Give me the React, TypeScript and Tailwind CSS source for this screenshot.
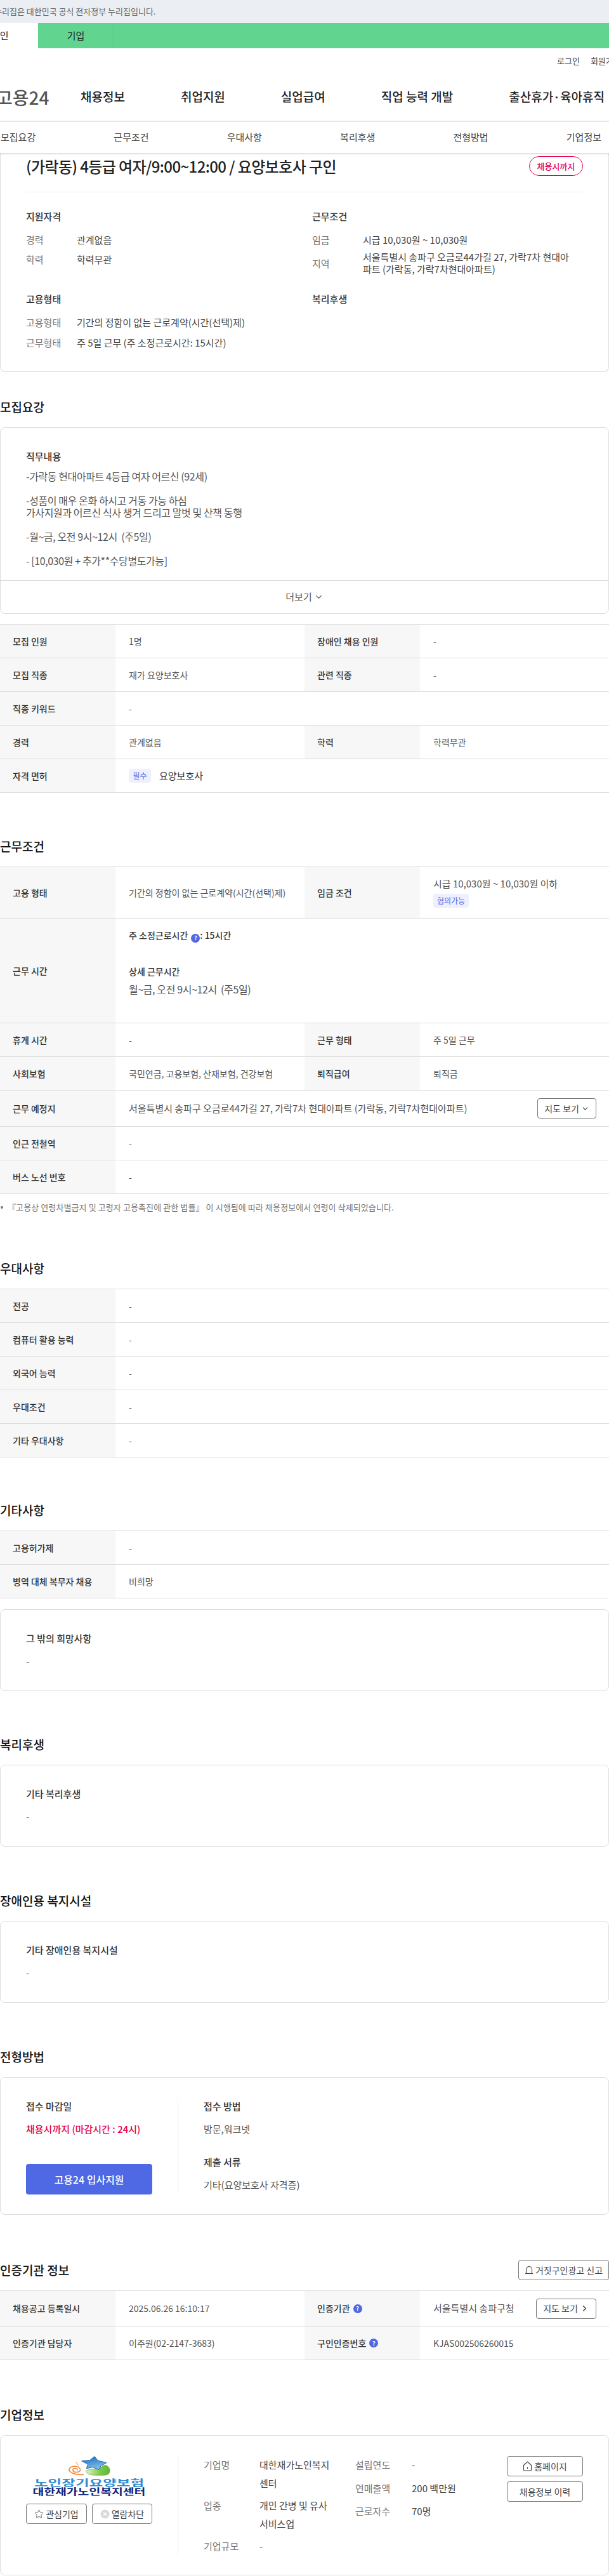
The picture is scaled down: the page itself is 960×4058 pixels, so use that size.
import type { ReactNode } from "react";
import { ChevronDown, ChevronRight, Star } from "lucide-react";

function HomeIcon() {
  return (
    <svg width="15" height="16" viewBox="0 0 15 16" fill="none" stroke="#444" strokeWidth="1.1">
      <path d="M1.5 6.5 7.5 1l6 5.5v7.5a1 1 0 0 1-1 1h-10a1 1 0 0 1-1-1z" strokeLinejoin="round" />
      <path d="M7.5 9.5v2.5" />
    </svg>
  );
}

function ReportIcon() {
  return (
    <svg width="14" height="14" viewBox="0 0 14 14" fill="none" stroke="#444" strokeWidth="1.1">
      <path d="M2.5 12.5V6a4.5 4.5 0 0 1 9 0v6.5" />
      <path d="M1 12.5h12" />
    </svg>
  );
}

function HelpDot() {
  return (
    <span className="mx-[5px] inline-flex h-[14px] w-[14px] items-center justify-center rounded-full bg-[#4f68e4] align-[-2px] text-[9px] leading-none font-bold text-white">
      ?
    </span>
  );
}

function Th({ children, className = "" }: { children: ReactNode; className?: string }) {
  return (
    <div className={`flex items-center bg-[#f7f7f7] pl-[20px] text-[14px] font-medium text-[#333] ${className}`}>{children}</div>
  );
}

function Td({ children, className = "" }: { children: ReactNode; className?: string }) {
  return <div className={`flex items-center pl-[21px] text-[14px] text-[#555] ${className}`}>{children}</div>;
}

// 4칸짜리 행
function Row4({ a, b, c, d }: { a: ReactNode; b: ReactNode; c: ReactNode; d: ReactNode }) {
  return (
    <div className="grid min-h-[53px] grid-cols-[182px_298px_182px_298px] border-b border-[#ddd]">
      <Th>{a}</Th>
      <Td>{b}</Td>
      <Th>{c}</Th>
      <Td>{d}</Td>
    </div>
  );
}

// 2칸짜리 행
function Row2({ a, b }: { a: ReactNode; b: ReactNode }) {
  return (
    <div className="grid min-h-[53px] grid-cols-[182px_778px] border-b border-[#ddd]">
      <Th>{a}</Th>
      <Td>{b}</Td>
    </div>
  );
}

function Heading({ children, right }: { children: ReactNode; right?: ReactNode }) {
  return (
    <div className="mb-[16px] flex h-[32px] items-center justify-between">
      <h2 className="text-[19px] font-medium text-[#111]">{children}</h2>
      {right}
    </div>
  );
}

function Table({ children }: { children: ReactNode }) {
  return <div className="border-t border-[#ddd]">{children}</div>;
}

function NoteCard({ title, className = "" }: { title: string; className?: string }) {
  return (
    <div className={`h-[129px] rounded-[8px] border border-[#ddd] pt-[33px] pl-[40px] ${className}`}>
      <div className="text-[15px] leading-[23px] font-medium text-[#333]">{title}</div>
      <div className="mt-[13px] text-[15px] leading-[23px] text-[#555]">-</div>
    </div>
  );
}

function OutlineBtn({ children, className = "" }: { children: ReactNode; className?: string }) {
  return (
    <button className={`flex h-[32px] items-center justify-center gap-[3px] rounded-[4px] border border-[#777] bg-white text-[14px] text-[#444] ${className}`}>
      {children}
    </button>
  );
}

function KV({ label, children, align = "items-center", width = "w-[80px]", valueClass = "" }: { label: string; children: ReactNode; align?: string; width?: string; valueClass?: string }) {
  return (
    <div className={`flex text-[15px] ${align}`}>
      <span className={`shrink-0 text-[#777] ${width}`}>{label}</span>
      <span className={`text-[#444] ${valueClass}`}>{children}</span>
    </div>
  );
}

function CompanyLogo() {
  return (
    <div className="flex h-[62px] flex-col items-center">
      <svg width="68" height="32" viewBox="320 148 205 95">
        <defs>
          <linearGradient id="starFill" x1="0" y1="0" x2="0.4" y2="1">
            <stop offset="0" stopColor="#1668b8" />
            <stop offset="1" stopColor="#7fc0ee" />
          </linearGradient>
          <linearGradient id="heartFill" x1="0" y1="0" x2="1" y2="0">
            <stop offset="0" stopColor="#e6f3c9" />
            <stop offset="0.6" stopColor="#7cc94a" />
            <stop offset="1" stopColor="#5fb73a" />
          </linearGradient>
        </defs>
        <path d="M395 238C350 240 320 225 325 210C330 195 370 192 378 212C382 228 345 232 342 215C342 205 365 205 365 217" fill="none" stroke="#f08a3c" strokeWidth="5" />
        <path d="M356 176l14 18" stroke="#f08a3c" strokeWidth="3" />
        <path d="M405 220C430 205 470 215 490 195C505 185 525 205 520 225C515 240 505 243 440 240C420 238 405 230 405 220Z" fill="url(#heartFill)" stroke="#4da52f" strokeWidth="2" />
        <path d="M447 150L463 170L505 180L478 196L468 214L440 202L408 208L415 188L385 172L425 168Z" fill="url(#starFill)" stroke="#1c5fae" strokeWidth="3" />
      </svg>
      <div className="mt-[3px] origin-center scale-x-[1.68] text-[14px] leading-[14px] font-bold whitespace-nowrap text-[#2d8cd0]">노인장기요양보험</div>
      <div className="origin-center scale-x-[1.38] text-[14px] leading-[14px] font-bold whitespace-nowrap text-[#12257d]">대한재가노인복지센터</div>
    </div>
  );
}

export default function App() {
  const subNav = ["모집요강", "근무조건", "우대사항", "복리후생", "전형방법", "기업정보"];

  return (
    <div className="w-[960px] overflow-hidden bg-white font-['Noto_Sans_CJK_KR','Noto_Sans',sans-serif] text-[#333]">
      {/* 상단 배너 */}
      <div className="flex h-[36px] items-center bg-[#ebeff4] text-[13px] whitespace-nowrap text-[#666]">
        <span className="-ml-[9px]">누리집은 대한민국 공식 전자정부 누리집입니다.</span>
      </div>
      <div className="flex h-[40px] bg-[#61d590] text-[15px] text-[#222]">
        <div className="flex w-[60px] items-center bg-white">
          <span className="-ml-[14px]">개인</span>
        </div>
        <div className="flex w-[120px] items-center justify-center border-r border-[#55c884]">기업</div>
      </div>

      {/* 헤더 */}
      <div className="flex h-[40px] items-center gap-[17px] pl-[878px] text-[13px] whitespace-nowrap text-[#444]">
        <span>로그인</span>
        <span>회원가입</span>
      </div>
      <div className="flex h-[76px] items-center border-b-2 border-[#eee] pb-[1px] whitespace-nowrap">
        <div className="w-[127px] shrink-0">
          <span className="-ml-[6px] block text-[28px] font-medium text-[#555]">고용24</span>
        </div>
        <nav className="flex gap-[88px] text-[19px] font-medium text-[#222]">
          <span>채용정보</span>
          <span>취업지원</span>
          <span>실업급여</span>
          <span>직업 능력 개발</span>
          <span>출산휴가·육아휴직</span>
        </nav>
      </div>
      <div className="relative z-10 flex h-[49px] items-center justify-between bg-white pr-[12px] pl-[1px] text-[15px] text-[#444] shadow-[0_1px_3px_rgba(0,0,0,0.2)]">
        {subNav.map((t) => (
          <span key={t}>{t}</span>
        ))}
      </div>

      {/* 공고 요약 */}
      <div className="h-[345px] rounded-b-[8px] border-x border-b border-[#ddd] px-[40px]">
        <div className="flex h-[62px] items-start justify-between border-b border-[#eee] pt-[5px]">
          <h1 className="text-[24px] leading-[31px] font-medium tracking-[-0.6px] text-[#222]">(가락동) 4등급 여자/9:00~12:00 / 요양보호사 구인</h1>
          <span className="flex h-[31px] w-[85px] items-center justify-center rounded-full border border-[#e6004d] text-[13px] font-medium text-[#e6004d]">
            채용시까지
          </span>
        </div>
        <div className="grid grid-cols-[451px_427px] pt-[26px]">
          <div className="h-[130px]">
            <h3 className="mb-[14px] text-[15px] leading-[23px] font-medium">지원자격</h3>
            <div className="flex flex-col gap-[8px] leading-[23px]">
              <KV label="경력">관계없음</KV>
              <KV label="학력">학력무관</KV>
            </div>
          </div>
          <div className="h-[130px]">
            <h3 className="mb-[14px] text-[15px] leading-[23px] font-medium">근무조건</h3>
            <div className="flex flex-col gap-[6px] leading-[23px]">
              <KV label="임금">시급 10,030원 ~ 10,030원</KV>
              <div className="leading-[19px]">
                <KV label="지역">
                  서울특별시 송파구 오금로44가길 27, 가락7차 현대아
                  <br />
                  파트 (가락동, 가락7차현대아파트)
                </KV>
              </div>
            </div>
          </div>
          <div>
            <h3 className="mb-[14px] text-[15px] leading-[23px] font-medium">고용형태</h3>
            <div className="flex flex-col gap-[9px] leading-[23px]">
              <KV label="고용형태">기간의 정함이 없는 근로계약(시간(선택)제)</KV>
              <KV label="근무형태">주 5일 근무 (주 소정근로시간: 15시간)</KV>
            </div>
          </div>
          <div>
            <h3 className="text-[15px] leading-[23px] font-medium">복리후생</h3>
          </div>
        </div>
      </div>

      {/* 모집요강 */}
      <section className="mt-[39px]">
        <Heading>모집요강</Heading>
        <div className="rounded-[8px] border border-[#ddd]">
          <div className="h-[240px] px-[40px] pt-[33px]">
            <div className="text-[15px] leading-[23px] font-medium">직무내용</div>
            <div className="mt-[11px] text-[16px] leading-[19px] tracking-[-0.4px] whitespace-pre-wrap text-[#555]">
              {"-가락동 현대아파트 4등급 여자 어르신 (92세)\n\n-성품이 매우 온화 하시고 거동 가능 하심\n가사지원과 어르신 식사 챙겨 드리고 말벗 및 산책 동행\n\n-월~금, 오전 9시~12시  (주5일)\n\n- [10,030원 + 추가**수당별도가능]"}
            </div>
          </div>
          <div className="flex h-[52px] items-center justify-center gap-[3px] border-t border-[#ddd] text-[15px] text-[#555]">
            더보기 <ChevronDown size={15} strokeWidth={2} />
          </div>
        </div>
        <div className="mt-[16px]">
          <Table>
            <Row4 a="모집 인원" b="1명" c="장애인 채용 인원" d="-" />
            <Row4 a="모집 직종" b="재가 요양보호사" c="관련 직종" d="-" />
            <Row2 a="직종 키워드" b="-" />
            <Row4 a="경력" b="관계없음" c="학력" d="학력무관" />
            <Row2
              a="자격 면허"
              b={
                <span className="flex items-center gap-[13px] text-[15px] text-[#333]">
                  <span className="flex h-[22px] w-[35px] items-center justify-center rounded-[4px] bg-[#eef0fd] text-[12px] text-[#4f68e4]">필수</span>
                  요양보호사
                </span>
              }
            />
          </Table>
        </div>
      </section>

      {/* 근무조건 */}
      <section className="mt-[68px]">
        <Heading>근무조건</Heading>
        <Table>
          <div className="grid min-h-[81px] grid-cols-[182px_298px_182px_298px] border-b border-[#ddd]">
            <Th>고용 형태</Th>
            <Td className="whitespace-nowrap">기간의 정함이 없는 근로계약(시간(선택)제)</Td>
            <Th>임금 조건</Th>
            <Td className="flex-col !items-start justify-center gap-[6px] text-[15px]">
              <span className="leading-[20px]">시급 10,030원 ~ 10,030원 이하</span>
              <span className="flex h-[22px] w-[56px] items-center justify-center rounded-[4px] bg-[#eef0fd] text-[12px] text-[#4f68e4]">협의가능</span>
            </Td>
          </div>
          <div className="grid min-h-[165px] grid-cols-[182px_778px] border-b border-[#ddd]">
            <Th>근무 시간</Th>
            <div className="pt-[15px] pl-[21px] text-[14px]">
              <div className="leading-[22px] font-medium">
                주 소정근로시간
                <HelpDot />
                <span className="-ml-[5px]">: 15시간</span>
              </div>
              <div className="mt-[34px] leading-[22px] font-medium">상세 근무시간</div>
              <div className="mt-[6px] text-[16px] leading-[22px] tracking-[-0.4px] whitespace-pre-wrap text-[#555]">월~금, 오전 9시~12시  (주5일)</div>
            </div>
          </div>
          <Row4 a="휴게 시간" b="-" c="근무 형태" d="주 5일 근무" />
          <Row4 a="사회보험" b="국민연금, 고용보험, 산재보험, 건강보험" c="퇴직급여" d="퇴직금" />
          <div className="grid min-h-[57px] grid-cols-[182px_778px] border-b border-[#ddd]">
            <Th>근무 예정지</Th>
            <Td className="justify-between pr-[20px] text-[15px]">
              서울특별시 송파구 오금로44가길 27, 가락7차 현대아파트 (가락동, 가락7차현대아파트)
              <OutlineBtn className="w-[93px]">
                지도 보기 <ChevronDown size={13} />
              </OutlineBtn>
            </Td>
          </div>
          <Row2 a="인근 전철역" b="-" />
          <Row2 a="버스 노선 번호" b="-" />
        </Table>
        <p className="mt-[11px] flex items-center gap-[7px] pl-[1px] text-[13px] leading-[20px] tracking-[0.1px] text-[#777]">
          <span className="h-[4px] w-[4px] rounded-full bg-[#777]" />
          『고용상 연령차별금지 및 고령자 고용촉진에 관한 법률』 이 시행됨에 따라 채용정보에서 연령이 삭제되었습니다.
        </p>
      </section>

      {/* 우대사항 */}
      <section className="mt-[70px]">
        <Heading>우대사항</Heading>
        <Table>
          <Row2 a="전공" b="-" />
          <Row2 a="컴퓨터 활용 능력" b="-" />
          <Row2 a="외국어 능력" b="-" />
          <Row2 a="우대조건" b="-" />
          <Row2 a="기타 우대사항" b="-" />
        </Table>
      </section>

      {/* 기타사항 */}
      <section className="mt-[67px]">
        <Heading>기타사항</Heading>
        <Table>
          <Row2 a="고용허가제" b="-" />
          <Row2 a="병역 대체 복무자 채용" b="비희망" />
        </Table>
        <NoteCard title="그 밖의 희망사항" className="mt-[17px]" />
      </section>

      <section className="mt-[68px]">
        <Heading>복리후생</Heading>
        <NoteCard title="기타 복리후생" />
      </section>

      <section className="mt-[69px]">
        <Heading>장애인용 복지시설</Heading>
        <NoteCard title="기타 장애인용 복지시설" />
      </section>

      {/* 전형방법 */}
      <section className="mt-[69px]">
        <Heading>전형방법</Heading>
        <div className="flex h-[217px] rounded-[8px] border border-[#ddd] pt-[32px] pl-[40px]">
          <div className="flex h-[152px] w-[240px] flex-col border-r border-[#eee] pr-[40px]">
            <div className="text-[15px] leading-[26px] font-medium">접수 마감일</div>
            <div className="mt-[10px] text-[15px] leading-[26px] font-medium text-[#e6004d]">채용시까지 (마감시간 : 24시)</div>
            <button className="mt-auto h-[48px] rounded-[4px] bg-[#4f68e4] text-[16px] font-medium text-white">고용24 입사지원</button>
          </div>
          <div className="pl-[40px]">
            <div className="text-[15px] leading-[26px] font-medium">접수 방법</div>
            <div className="mt-[10px] text-[15px] leading-[26px] text-[#555]">방문,워크넷</div>
            <div className="mt-[26px] text-[15px] leading-[26px] font-medium">제출 서류</div>
            <div className="mt-[10px] text-[15px] leading-[26px] text-[#555]">기타(요양보호사 자격증)</div>
          </div>
        </div>
      </section>

      {/* 인증기관 정보 */}
      <section className="mt-[71px]">
        <Heading
          right={
            <OutlineBtn className="w-[143px]">
              <ReportIcon /> 거짓구인광고 신고
            </OutlineBtn>
          }
        >
          인증기관 정보
        </Heading>
        <Table>
          <div className="grid min-h-[56px] grid-cols-[182px_298px_182px_298px] border-b border-[#ddd]">
            <Th>채용공고 등록일시</Th>
            <Td>2025.06.26 16:10:17</Td>
            <Th>
              인증기관
              <HelpDot />
            </Th>
            <Td className="justify-between pr-[20px] text-[15px]">
              서울특별시 송파구청
              <OutlineBtn className="w-[95px]">
                지도 보기 <ChevronRight size={15} strokeWidth={2.5} />
              </OutlineBtn>
            </Td>
          </div>
          <Row4
            a="인증기관 담당자"
            b="이주원(02-2147-3683)"
            c={
              <>
                구인인증번호
                <HelpDot />
              </>
            }
            d="KJAS002506260015"
          />
        </Table>
      </section>

      {/* 기업정보 */}
      <section className="mt-[70px]">
        <Heading>기업정보</Heading>
        <div className="flex h-[221px] rounded-[8px] border border-[#ddd] pt-[32px] pl-[40px]">
          <div className="h-[156px] w-[240px] border-r border-[#eee] pr-[40px]">
            <CompanyLogo />
            <div className="mt-[13px] flex gap-[8px]">
              <OutlineBtn className="w-[96px]">
                <Star size={15} strokeWidth={1.3} /> 관심기업
              </OutlineBtn>
              <OutlineBtn className="w-[95px]">
                <svg width="15" height="15" viewBox="0 0 15 15">
                  <circle cx="7.5" cy="7.5" r="7" fill="#d9d9d9" />
                  <path d="M5 5l5 5M10 5l-5 5" stroke="#fff" strokeWidth="1.3" />
                </svg>
                열람차단
              </OutlineBtn>
            </div>
          </div>
          <div className="flex pl-[40px] text-[15px] leading-[28.5px]">
            <div className="flex w-[239px] flex-col gap-[7px]">
              <KV label="기업명" align="items-start" width="w-[88px]" valueClass="w-[115px]">대한재가노인복지센터</KV>
              <KV label="업종" align="items-start" width="w-[88px]" valueClass="w-[115px]">개인 간병 및 유사 서비스업</KV>
              <KV label="기업규모" align="items-start" width="w-[88px]">-</KV>
            </div>
            <div className="flex w-[239px] flex-col gap-[8px]">
              <KV label="설립연도" width="w-[89px]">-</KV>
              <KV label="연매출액" width="w-[89px]">200 백만원</KV>
              <KV label="근로자수" width="w-[89px]">70명</KV>
            </div>
            <div className="flex w-[120px] flex-col gap-[8px]">
              <OutlineBtn className="w-[120px]">
                <HomeIcon /> 홈페이지
              </OutlineBtn>
              <OutlineBtn className="w-[120px]">채용정보 이력</OutlineBtn>
            </div>
          </div>
        </div>
      </section>
    </div>
  );
}
